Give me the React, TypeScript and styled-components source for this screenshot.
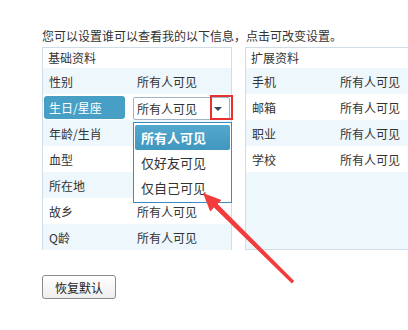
import styled, { createGlobalStyle } from "styled-components"

const GlobalStyle = createGlobalStyle`
    html, body {
        margin: 0;
        padding: 0;
        background: #ffffff;
        overflow: hidden;
    }
    body {
        font-family: "Noto Sans CJK SC", "Microsoft YaHei", sans-serif;
        font-size: 12px;
        color: #333333;
    }
`

type Item = { label: string, value: string }

const basic: Item[] = [
    { label: '性别', value: '所有人可见' },
    { label: '生日/星座', value: '所有人可见' },
    { label: '年龄/生肖', value: '' },
    { label: '血型', value: '' },
    { label: '所在地', value: '' },
    { label: '故乡', value: '所有人可见' },
    { label: 'Q龄', value: '所有人可见' },
]

const extended: Item[] = [
    { label: '手机', value: '所有人可见' },
    { label: '邮箱', value: '所有人可见' },
    { label: '职业', value: '所有人可见' },
    { label: '学校', value: '所有人可见' },
]

const options = ['所有人可见', '仅好友可见', '仅自己可见']

export default function App() {
    return (
        <Page>
            <GlobalStyle />
            <Intro>您可以设置谁可以查看我的以下信息，点击可改变设置。</Intro>
            <Panels>
                <Panel>
                    <PanelHeader>基础资料</PanelHeader>
                    {basic.map((item, i) => i === 1 ? (
                        <Row key={item.label} $light={false}>
                            <ActiveLabel>{item.label}</ActiveLabel>
                            <SelectBox>
                                <span>{item.value}</span>
                                <Caret />
                                <RedMark />
                            </SelectBox>
                            <Dropdown>
                                {options.map((o, j) => (
                                    <Option key={o} $active={j === 0}>{o}</Option>
                                ))}
                            </Dropdown>
                        </Row>
                    ) : (
                        <Row key={item.label} $light={i % 2 === 0}>
                            <Label>{item.label}</Label>
                            <Value>{item.value}</Value>
                        </Row>
                    ))}
                </Panel>
                <Panel>
                    <PanelHeader>扩展资料</PanelHeader>
                    {extended.map((item, i) => (
                        <Row key={item.label} $light={i % 2 === 0}>
                            <Label>{item.label}</Label>
                            <Value>{item.value}</Value>
                        </Row>
                    ))}
                </Panel>
            </Panels>
            <ResetButton>恢复默认</ResetButton>
            <Pointer width="408" height="330" viewBox="0 0 408 330">
                <polygon
                    points="203,193 221.4,200 217.6,203.9 294.2,281 291.8,283.6 214,207.5 210.2,211.4"
                    fill="#f23b3b"
                />
            </Pointer>
        </Page>
    )
}

const Page = styled.div`
    position: relative;
    width: 408px;
    height: 330px;
    padding: 28px 0 0 42px;
    box-sizing: border-box;
`

const Intro = styled.p`
    margin: 0 0 3px;
    line-height: 16px;
    white-space: nowrap;
`

const Panels = styled.div`
    display: flex;
    gap: 13px;
    overflow: hidden;
`

const Panel = styled.div`
    flex: none;
    width: 190px;
    height: 203px;
    border: 1px solid #cfdde8;
    background-color: #eef7fc;
    box-sizing: border-box;
`

const PanelHeader = styled.div`
    height: 20px;
    line-height: 20px;
    padding-left: 5px;
    background-color: #ffffff;
`

const Row = styled.div<{ $light: boolean }>`
    position: relative;
    display: grid;
    grid-template-columns: 90px 1fr;
    align-items: center;
    height: 26px;
    background-color: ${props => props.$light ? '#eef7fc' : '#ffffff'};
`

const Label = styled.span`
    padding-left: 6px;
`

const Value = styled.span`
    padding-left: 4px;
    white-space: nowrap;
`

const ActiveLabel = styled.span`
    align-self: start;
    margin: 2px 0 0 1px;
    width: 81px;
    height: 23px;
    line-height: 23px;
    padding-left: 5px;
    box-sizing: border-box;
    border-radius: 3px;
    background-color: #479fc5;
    color: #ffffff;
`

const SelectBox = styled.div`
    position: relative;
    align-self: start;
    display: flex;
    align-items: center;
    margin-top: 3px;
    width: 97px;
    height: 23px;
    padding-left: 3px;
    box-sizing: border-box;
    border: 1px solid #9fb4c7;
    border-radius: 2px;
    background-color: #ffffff;
`

const Caret = styled.i`
    position: absolute;
    right: 7px;
    top: 9px;
    width: 0;
    height: 0;
    border-left: 4px solid transparent;
    border-right: 4px solid transparent;
    border-top: 4px solid #34485c;
`

const RedMark = styled.i`
    position: absolute;
    left: 76px;
    top: -3px;
    width: 23px;
    height: 25px;
    border: 2px solid #e8302f;
    box-sizing: border-box;
`

const Dropdown = styled.div`
    position: absolute;
    left: 90px;
    top: 28px;
    width: 99px;
    padding: 2px 1px;
    box-sizing: border-box;
    border: 1px solid #3a8cc2;
    background-color: #ffffff;
    z-index: 2;
`

const Option = styled.div<{ $active: boolean }>`
    height: 25px;
    line-height: 25px;
    padding-left: 6px;
    font-size: 13px;
    border-radius: 2px;
    color: ${props => props.$active ? '#ffffff' : '#333333'};
    font-weight: ${props => props.$active ? 'bold' : 'normal'};
    background: ${props => props.$active ? 'linear-gradient(#52a8cd, #4097bf)' : 'transparent'};
`

const ResetButton = styled.button`
    display: block;
    margin-top: 25px;
    width: 74px;
    height: 24px;
    padding: 0;
    font-family: "Noto Sans CJK SC", sans-serif;
    font-size: 12px;
    color: #222222;
    border: 1px solid #8c8c8c;
    border-radius: 3px;
    background: linear-gradient(#ffffff, #eeeeee);
`

const Pointer = styled.svg`
    position: absolute;
    left: 0;
    top: 0;
    pointer-events: none;
    z-index: 3;
`
